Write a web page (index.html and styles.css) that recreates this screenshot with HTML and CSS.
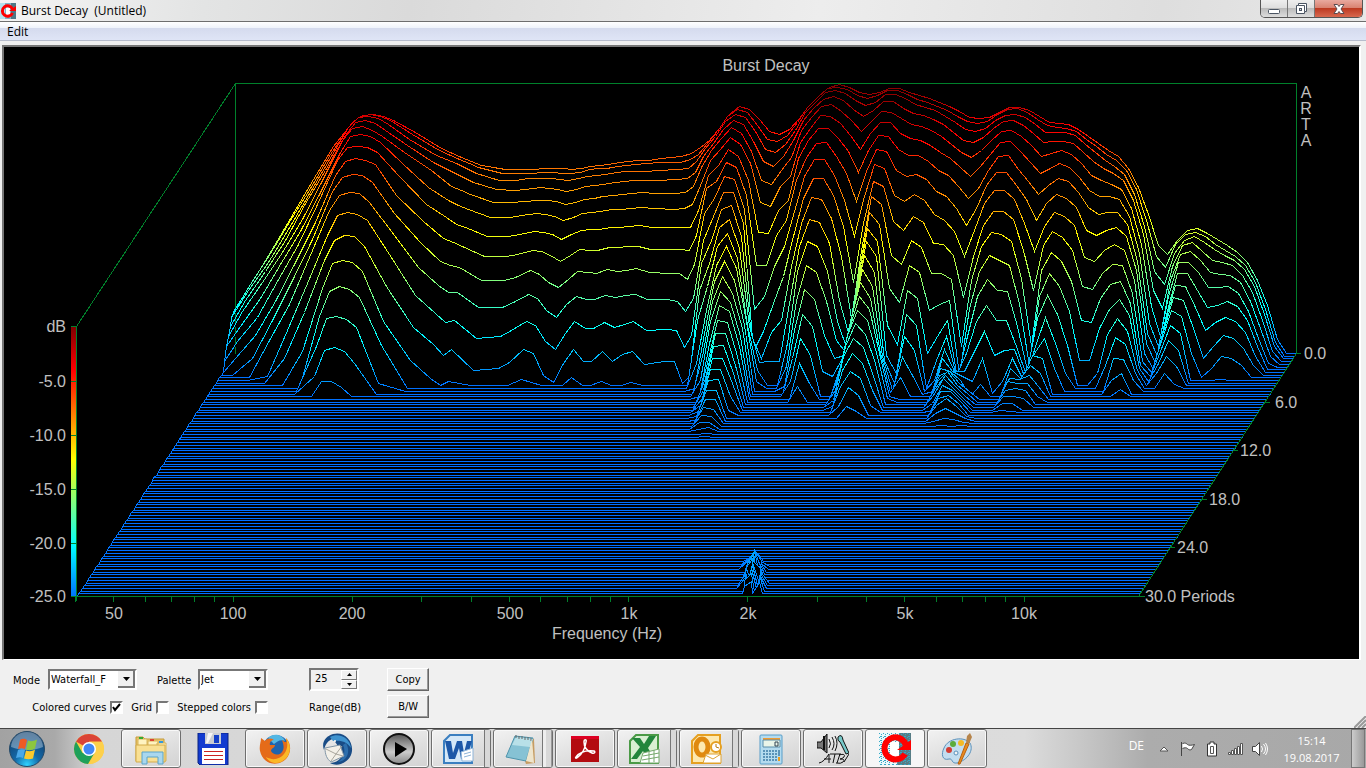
FILE: index.html
```html
<!DOCTYPE html>
<html lang="en">
<head>
  <meta charset="UTF-8">
  <meta name="viewport" content="width=device-width, initial-scale=1.0">
  <title>Burst Decay (Untitled)</title>
  <link rel="stylesheet" href="styles.css">
</head>
<body>
  <header class="titlebar">
    <svg class="app-icon" viewBox="0 0 32 32" aria-hidden="true">
      <rect width="32" height="32" fill="#7fb4c8"/>
      <path d="M0 0h10v32H0z" fill="#b5e2ee"/><path d="M22 0h10v32H22z" fill="#4f7886"/>
      <path d="M12 9h8v16h-8z" fill="#fff"/>
      <path d="M25 20a10.500 10.500 0 1 1 0-8" fill="none" stroke="#f00" stroke-width="6"/>
      <path d="M18 16h14V6z" fill="#f00"/>
    </svg>
    <span class="title">Burst Decay&nbsp; (Untitled)</span>
    <div class="window-buttons">
      <button class="win-btn" aria-label="Minimize">
        <svg width="14" height="14" viewBox="0 0 14 14"><rect x="1.500" y="7.500" width="11" height="4" rx="1" fill="#fff" stroke="#4b5563"/></svg>
      </button>
      <button class="win-btn" aria-label="Restore">
        <svg width="14" height="14" viewBox="0 0 14 14"><path d="M4.500 1.500h8v8h-2v2h-8v-8h2z" fill="#fff" stroke="#4b5563"/><path d="M4.500 3.500h6v6" fill="none" stroke="#4b5563"/><rect x="5.500" y="6.500" width="2" height="2" fill="#ddd" stroke="#4b5563"/></svg>
      </button>
      <button class="win-btn close" aria-label="Close">
        <svg width="14" height="14" viewBox="0 0 14 14"><path d="M2 2.500h3.500L7 4.500l1.500-2H12L9 7l3 4.500H8.500L7 9.500l-1.500 2H2L5 7z" fill="#fff" stroke="#5b4b50"/></svg>
      </button>
    </div>
  </header>

  <nav class="menubar"><button class="menu-item">Edit</button></nav>

  <main class="plot">
    <svg class="chart" viewBox="4 47 1355 612" role="img" aria-label="Burst Decay">
      <defs>
        <linearGradient id="jet" gradientUnits="userSpaceOnUse" x1="0" y1="327" x2="0" y2="597">
          <stop offset="0" stop-color="#800000"/>
          <stop offset=".16" stop-color="#f00"/>
          <stop offset=".49" stop-color="#ff0"/>
          <stop offset=".81" stop-color="#0ff"/>
          <stop offset="1" stop-color="#0070ff"/>
        </linearGradient>
      </defs>
      <rect x="71" y="327" width="5" height="270" fill="url(#jet)"/>
      <path class="axis" d="M76.500 326.500L235.500 83.500H1296.500V353.500M235.500 83.500V353.500"/>
      <g id="slices"></g>
      <path class="axis" d="M76.500 326.500V601M71 326.500h6M71 381.500h6M71 435.500h6M71 489.500h6M71 543.500h6M71 596.500H1145"/>
      <path class="axis" d="M1296.500 353.500L1138.500 596.500M1296 353.500h5M1265 402.500h5M1233 450.500h5M1202 499.500h5M1170 547.500h5"/>
      <path class="axis" id="ticks"/>
      <g class="labels" id="labels">
        <text class="mid" x="766" y="71">Burst Decay</text>
        <text class="mid" x="1306" y="98">A</text>
        <text class="mid" x="1306" y="114">R</text>
        <text class="mid" x="1306" y="130">T</text>
        <text class="mid" x="1306" y="146">A</text>
        <text class="end" x="66" y="332">dB</text>
        <text class="end" x="66" y="387">-5.0</text>
        <text class="end" x="66" y="441">-10.0</text>
        <text class="end" x="66" y="495">-15.0</text>
        <text class="end" x="66" y="549">-20.0</text>
        <text class="end" x="66" y="602">-25.0</text>
        <text class="mid" x="114" y="619">50</text>
        <text class="mid" x="233" y="619">100</text>
        <text class="mid" x="352" y="619">200</text>
        <text class="mid" x="510" y="619">500</text>
        <text class="mid" x="629" y="619">1k</text>
        <text class="mid" x="748" y="619">2k</text>
        <text class="mid" x="905" y="619">5k</text>
        <text class="mid" x="1024" y="619">10k</text>
        <text class="mid" x="607" y="639">Frequency (Hz)</text>
        <text x="1304" y="359">0.0</text>
        <text x="1275" y="408">6.0</text>
        <text x="1240" y="456">12.0</text>
        <text x="1209" y="505">18.0</text>
        <text x="1177" y="553">24.0</text>
        <text x="1145" y="602">30.0 Periods</text>
      </g>
    </svg>
  </main>

  <section class="controls">
    <div class="options">
      <div class="row">
        <label for="mode" class="mode-label">Mode</label>
        <select id="mode" class="drop mode"><option>Waterfall_F</option></select>
        <label for="palette" class="palette-label">Palette</label>
        <select id="palette" class="drop palette"><option>Jet</option></select>
      </div>
      <div class="row checks">
        <label for="colored">Colored curves</label><input type="checkbox" id="colored" checked>
        <label for="grid">Grid</label><input type="checkbox" id="grid">
        <label for="stepped">Stepped colors</label><input type="checkbox" id="stepped">
      </div>
    </div>
    <div class="range">
      <div class="spin">
        <input type="text" id="range" value="25">
        <div class="spin-buttons">
          <button aria-label="Increase"><svg width="5" height="3" viewBox="0 0 5 3"><path d="M0 3L2.500 0L5 3z"/></svg></button>
          <button aria-label="Decrease"><svg width="5" height="3" viewBox="0 0 5 3"><path d="M0 0h5L2.500 3z"/></svg></button>
        </div>
      </div>
      <label for="range">Range(dB)</label>
    </div>
    <div class="actions">
      <button class="push">Copy</button>
      <button class="push">B/W</button>
    </div>
    <svg class="grip" width="12" height="12" viewBox="0 0 12 12" aria-hidden="true"><path d="M0 12L12 0M4 12l8-8M8 12l4-4" stroke="#999" stroke-width="2"/></svg>
  </section>

  <footer class="taskbar">
    <button class="start" aria-label="Start">
      <svg width="38" height="38" viewBox="0 0 38 38">
        <defs>
          <radialGradient id="orb" cx=".5" cy=".95" r=".9"><stop offset="0" stop-color="#2fd3ff"/><stop offset=".4" stop-color="#1469a8"/><stop offset="1" stop-color="#123e6b"/></radialGradient>
        </defs>
        <circle cx="19" cy="19" r="17.500" fill="url(#orb)" stroke="#254a68"/>
        <path d="M3 17a16 15 0 0 1 32 0c-9 4-22 4-32 0z" fill="#dcecf5" opacity=".4"/>
        <path d="M12 10c3-2 5-1 7 0l-2 9c-2-1-5-1-7 0z" fill="#ee5a24"/>
        <path d="M20 10.500c3 1 5 1 9-1l-2 9c-3 2-6 2-9 1z" fill="#8cc63f"/>
        <path d="M10 20c2-1 5-1 7 0l-2 8c-2-1-4-1-7 0z" fill="#4aa8e8"/>
        <path d="M18 20.500c3 1 6 1 9-1l-2 9c-3 1-6 1-9 0z" fill="#fcc92c"/>
      </svg>
    </button>
    <div class="tasks">
      <button class="task" aria-label="Chrome">
        <svg viewBox="0 0 32 32"><circle cx="16" cy="16" r="15" fill="#fc4"/><path d="M16 16L3 8.500A15 15 0 0 1 29 8.500H16z" fill="#db4437"/><path d="M3 8.500A15 15 0 0 0 15 31l7-12-6-3L9.500 20z" fill="#1ea05a"/><path d="M29.400 9H16l6.500 11L16 31A15 15 0 0 0 29.400 9z" fill="#fdd04b"/><circle cx="16" cy="16" r="7" fill="#fff"/><circle cx="16" cy="16" r="5.500" fill="#4387f5"/></svg>
      </button>
      <button class="task open" aria-label="Explorer">
        <svg viewBox="0 0 32 32"><path d="M1 4h7l2 2h19v22H1z" fill="#e8c56a" stroke="#c59b3a"/><path d="M3 6h9v20H3zM13 8h10v18H13zM22 10h9v18H22z" fill="#fff3c0" stroke="#d8b45a"/><path d="M1 12h29v17H1z" fill="#f9e093" stroke="#d4ac4a"/><path d="M4 4h4v2H4z" fill="#3a3"/><path d="M15 6h4v2h-4z" fill="#d43"/><path d="M24 8h4v2h-4z" fill="#39d"/><path d="M7 31V19h21v12h-5v-7H12v7z" fill="#a9d7ee" stroke="#5ba4ca"/></svg>
      </button>
      <button class="task" aria-label="Save">
        <svg viewBox="0 0 32 32"><path d="M1 0h30v32H3l-2-2z" fill="#123bd0" stroke="#0a2380"/><path d="M8 0h16v11H8z" fill="#c8ccd2"/><path d="M11 0l5 0-5 10H9z" fill="#f5f5f5"/><path d="M17 2h5v8h-5z" fill="#1440c8"/><path d="M5 15h23v16H5z" fill="#fff"/><path d="M7 18.500h19M7 22.500h19M7 26.500h19" stroke="#c22"/></svg>
      </button>
      <button class="task open" aria-label="Firefox">
        <svg viewBox="0 0 32 32"><circle cx="17" cy="15" r="13" fill="#1f63ad"/><path d="M9 5c6-6 15-3 17 3-5-2-8 1-11 3z" fill="#52b7e4"/><path d="M2 5l4 3c3-3 6-3 9-1-3 0-5 3-4 5h5c0 3-4 3-4 6 2 4 8 5 11 1 3-4 1-9 0-12 4 3 5 3 4-2 6 6 5 16 0 21C19 34 4 32 1 18 0 13 2 9 2 5z" fill="#e56b19"/><path d="M27 5c7 9 4 20-5 24-7 3-13-1-15-5 7 4 14 2 18-3 4-5 4-11 2-16z" fill="#fbb827"/></svg>
      </button>
      <button class="task open" aria-label="Thunderbird">
        <svg viewBox="0 0 32 32"><path d="M12 1C23-2 32 7 31 18c-1 10-13 17-22 12 6 0 12-4 13-10L12 6C7 7 4 12 3 17 0 9 5 3 12 1z" fill="#194c86"/><path d="M9 4c9-5 20 1 21 11-4-6-9-8-18-7z" fill="#3f93cf"/><path d="M25 10c5 9 1 18-8 19 6-4 8-11 5-17z" fill="#2d6eac"/><path d="M4 15l15-3 4 11-13 6c-4-3-6-7-6-14z" fill="#f3f0e8" stroke="#8296a7"/><path d="M5 16l10 5 6-8M10 28l5-7 7 2" fill="none" stroke="#a9a69d"/><circle cx="14" cy="8" r="1" fill="#fff"/></svg>
      </button>
      <button class="task open" aria-label="Player">
        <svg viewBox="0 0 32 32"><defs><linearGradient id="steel" x1="0" y1="0" x2="0" y2="1"><stop offset="0" stop-color="#555"/><stop offset=".6" stop-color="#ccc"/><stop offset="1" stop-color="#888"/></linearGradient></defs><circle cx="16" cy="16" r="15" fill="url(#steel)" stroke="#111" stroke-width="2"/><path d="M12 9l12 7-12 8z" fill="#000"/></svg>
      </button>
      <button class="task open stack" aria-label="Word">
        <svg viewBox="0 0 32 32"><path d="M8 2h22v28H2V8z" fill="#d5e8f8" stroke="#3b7fc0" stroke-width="2"/><path d="M3 8h6l2 12 4-12h5l2 12 3-12h5l-5 18h-6l-2-11-4 11H7z" fill="#1d58a8"/><path d="M19 19l12-4v13H20z" fill="#fff" stroke="#8eb4d8"/><path d="M22 21l7-2M22 24l7-2" stroke="#8eb4d8"/></svg>
      </button>
      <button class="task open stack many" aria-label="Notepad">
        <svg viewBox="0 0 32 32"><path d="M12 3l18 3 1 24-9 1z" fill="#c69c62"/><path d="M11 3l18 2-7 23L2 24z" fill="#86c2d4" stroke="#4f94ac"/><path d="M12 4l17 2-3 8-18-2z" fill="#b8e0e8"/><path d="M12 2v3m3-2v3m3-3v3m3-2v3m3-3v3m3-2v3" stroke="#666"/><path d="M28 6l2 24-8-2z" fill="#eee5cd"/></svg>
      </button>
      <button class="task open" aria-label="Reader">
        <svg viewBox="0 0 32 32"><path d="M2 3h28v26H2z" fill="#b30b10"/><path d="M2 3h28v3H2z" fill="#d02"/><path d="M7 24c3-4 9-7 18-6 2 1 0 3-2 2-5-2-8-6-8-11 0-3 3-3 2 0-1 7-4 12-8 15-2 2-3 1-2 0z" fill="none" stroke="#fff" stroke-width="1.500"/></svg>
      </button>
      <button class="task open stack" aria-label="Excel">
        <svg viewBox="0 0 32 32"><path d="M8 2h22v28H2V8z" fill="#d9efd2" stroke="#4b9a46" stroke-width="2"/><path d="M4 5h8l4 6 5-8h7l-8 12 6 10h-7l-4-7-6 8H3l9-12z" fill="#23863c"/><path d="M15 20l16-4v14H12z" fill="#fff" stroke="#76a96c"/><path d="M15 23l16-3M14 27l17-3M21 18v12M26 17v12" stroke="#76a96c"/></svg>
      </button>
      <button class="task open stack" aria-label="Outlook">
        <svg viewBox="0 0 32 32"><path d="M8 2h22v28H2V8z" fill="#fde9b0" stroke="#e5a021" stroke-width="2"/><ellipse cx="12" cy="14" rx="6" ry="8" fill="none" stroke="#e08a10" stroke-width="5"/><path d="M16 21h15v9H13z" fill="#fff" stroke="#dda334"/><path d="M15 22l8 4 8-5" fill="none" stroke="#dda334"/><circle cx="26" cy="14" r="5" fill="#fff" stroke="#e5a021" stroke-width="2"/><path d="M26 11v3l3 1" fill="none" stroke="#b77910"/></svg>
      </button>
      <button class="task open" aria-label="Calculator">
        <svg viewBox="0 0 32 32"><rect x="5" y="2" width="22" height="29" rx="1" fill="#b4dbef" stroke="#579dc8"/><path d="M8 5h17v2H8z" fill="#ed9b34"/><path d="M8 7h17v7H8z" fill="#eaf5e9" stroke="#5a8eaa"/><path d="M20 9h3v4h-3z" fill="none" stroke="#345"/><path d="M8 18h14M8 21h14M8 24h14M8 27h14" stroke="#5b93b8" stroke-width="2" stroke-dasharray="2 1"/><path d="M23 17h2v6h-2z" fill="#5b93b8"/><path d="M23 24h2v4h-2z" fill="#ef9c1a"/></svg>
      </button>
      <button class="task open" aria-label="ATB">
        <svg viewBox="0 0 32 32"><path d="M0 9h4l6-8v19l-6-5H0z" fill="#777" stroke="#111"/><path d="M7 3v14" stroke="#111" stroke-width="2"/><path d="M12 6q3 5 0 9M15 4q4 7 0 13M18 3q4 7 0 15" fill="none" stroke="#111"/><path d="M21 4q4-4 5 3l6 13-3 1-6-12q-3-1-2-5z" fill="#77c9c9" stroke="#111"/><path d="M2 30q5-1 10-9v9M7 26h7M13 21h11M18 21l-2 9M23 21l-3 9M22 22q7-2 5 2-2 2-4 2 6 0 3 3-2 2-7 1M27 29l5-8" fill="none" stroke="#111"/></svg>
      </button>
      <button class="task open active" aria-label="ARTA">
        <svg viewBox="0 0 32 32"><defs><pattern id="noise" width="4" height="4" patternUnits="userSpaceOnUse"><path d="M0 0h1v1H0zM2 1h1v1H2zM1 3h2v1H1z" fill="#39a7c4"/></pattern></defs><path d="M0 0h32v32H0z" fill="#e8f8fb"/><path d="M20 0h12v32H18z" fill="#577d86"/><path d="M0 0h32v32H0z" fill="url(#noise)"/><path d="M11 9h9v15h-9z" fill="#fff"/><path d="M26 21a11 11 0 1 1 1-9" fill="none" stroke="#f00" stroke-width="6"/><path d="M18 17h14V7z" fill="#f00"/></svg>
      </button>
      <button class="task open" aria-label="Paint">
        <svg viewBox="0 0 32 32"><path d="M3 15C7 5 23 3 29 10c4 7-2 17-13 20-6 1-4-5-8-4-7 2-8-5-5-11z" fill="#c3ddef" stroke="#5b91ba"/><circle cx="8" cy="17" r="3" fill="#d43c32"/><circle cx="12" cy="11" r="3" fill="#5bab3b"/><circle cx="20" cy="10" r="3" fill="#f4ba26"/><circle cx="15" cy="20" r="2" fill="#f4f4f4" stroke="#5b91ba"/><path d="M25 10l3 1-9 20-2 0z" fill="#e98c20" stroke="#b76110"/><path d="M25 10l1-7 3-3 2 4-3 7z" fill="#b6844b"/></svg>
      </button>
    </div>
    <div class="tray">
      <span class="lang">DE</span>
      <svg width="16" height="6" viewBox="0 0 16 6"><path d="M4 5l4-4 4 4z" fill="#fff" stroke="#555"/></svg>
      <svg width="16" height="16" viewBox="0 0 16 16"><path d="M1.500 1v14M2.500 2.500c3-1 4 0 5 1s4 1 7 0l-3 5c-2 1-3 0-4-1s-3-1-5 0" fill="#fff" stroke="#444"/></svg>
      <svg width="16" height="16" viewBox="0 0 16 16"><path d="M6 1h4v2h2.500v12h-9V3H6z" fill="#fff" stroke="#333"/><path d="M6.500 5.500h3v7h-3z" fill="#fff" stroke="#555"/></svg>
      <svg width="16" height="16" viewBox="0 0 16 16"><path d="M.500 11.500h2v2h-2zM3.500 9.500h2v4h-2zM6.500 7.500h2v6h-2zM9.500 5.500h2v8h-2zM12.500 2.500h2v11h-2z" fill="#fff" stroke="#555"/></svg>
      <svg width="16" height="16" viewBox="0 0 16 16"><path d="M.500 5.500h3l4-4v13l-4-4h-3z" fill="#fff" stroke="#444"/><path d="M9.500 5q2 3 0 6M11.500 3q4 5 0 10M13.500 2q4 6 0 12" fill="none" stroke="#fff"/></svg>
      <div class="clock"><time>15:14</time><time>19.08.2017</time></div>
      <button class="desktop" aria-label="Show desktop"></button>
    </div>
  </footer>
  <script src="waterfall.js"></script>
</body>
</html>
```
FILE: styles.css
```css
* { box-sizing: border-box; }
body {
  margin: 0;
  min-height: 100vh;
  display: flex;
  flex-direction: column;
  background: #f0f0f0;
  color: #000;
  font-family: "DejaVu Sans Condensed", "DejaVu Sans", sans-serif;
  font-size: 11px;
}
button, select, input { font: inherit; color: inherit; }
button { border: none; background: none; padding: 0; }

.titlebar {
  display: flex;
  align-items: center;
  height: 22px;
  gap: 5px;
  background: linear-gradient(100deg, #f4f4f4, #e3e4e4 15%, #dadada 30%, #ededed 60%, #dedede 85%, #e8e8e8);
  border-bottom: 1px solid #6e6e6e;
  font-family: "Open Sans", "Noto Sans", sans-serif;
  font-size: 12px;
}
.app-icon { width: 16px; height: 16px; }
.title { flex: 1; }
.window-buttons {
  display: flex;
  align-self: flex-start;
  height: 18px;
  margin-right: 3px;
  border: 1px solid #555;
  border-top: none;
  border-radius: 0 0 5px 5px;
  overflow: hidden;
}
.win-btn {
  width: 27px;
  display: flex;
  align-items: center;
  justify-content: center;
  background: linear-gradient(#eee, #ddd 50%, #bbb 50%, #ddd);
  border-right: 1px solid #777;
}
.win-btn.close {
  width: 47px;
  border: none;
  background: linear-gradient(#e9a99f, #d8806f 48%, #bd3a22 50%, #d8684f);
}

.menubar {
  height: 19px;
  display: flex;
  align-items: center;
  padding-left: 7px;
  background: linear-gradient(#fff, #eef2fa 35%, #d5dbee 36%, #dfe5f6);
  border-bottom: 1px solid #b6bccc;
  font-family: "Open Sans", "Noto Sans", sans-serif;
  font-size: 12px;
}

.plot {
  margin: 4px 5px 0 2px;
  border: 2px solid #777;
  border-right-color: #fff;
  border-bottom: 1px solid #fff;
  background: #000;
}
.chart { display: block; width: 100%; }
.axis { fill: none; stroke: #00802b; shape-rendering: crispEdges; }
.slice { fill: #000; shape-rendering: crispEdges; }
.labels {
  fill: #c0c0c0;
  font-family: "Liberation Sans", Arial, sans-serif;
  font-size: 16px;
}
.mid { text-anchor: middle; }
.end { text-anchor: end; }

.controls {
  flex: 1;
  display: flex;
  align-items: flex-start;
  padding: 8px 0 0 13px;
}
.options { display: flex; flex-direction: column; gap: 5px; }
.row { display: flex; align-items: center; height: 23px; }
.mode-label { width: 35px; padding-top: 2px; }
.palette-label { width: 41px; margin-left: 20px; padding-top: 2px; }
.checks { justify-content: flex-end; }
.checks label + input { margin-right: 8px; }
.checks label + input:last-child { margin-right: 0; }
.drop, .spin, input[type="checkbox"] {
  border: 2px solid;
  border-color: #777 #fff #fff #777;
}
.drop {
  appearance: none;
  height: 21px;
  padding: 0 1px;
  border-radius: 0;
  background: #fff url("data:image/svg+xml,%3Csvg xmlns='http://www.w3.org/2000/svg' width='17' height='17'%3E%3Cpath fill='%23f0f0f0' d='M0 0h17v17H0z'/%3E%3Cpath fill='none' stroke='%23777' stroke-width='2' d='M16 0v16H0'/%3E%3Cpath d='M5 6h7l-3.500 4z'/%3E%3C/svg%3E") no-repeat right center;
}
.mode { width: 89px; }
.palette { width: 70px; }
input[type="checkbox"] {
  appearance: none;
  width: 13px;
  height: 13px;
  margin: 0 0 0 4px;
  background: #fff;
}
input[type="checkbox"]:checked {
  background: #fff url("data:image/svg+xml,%3Csvg xmlns='http://www.w3.org/2000/svg' width='9' height='9'%3E%3Cpath fill='none' stroke='%23000' stroke-width='2' d='M1 4l2 3 5-6'/%3E%3C/svg%3E") center;
}
.range { margin-left: 41px; display: flex; flex-direction: column; gap: 4px; }
.range label { height: 23px; line-height: 26px; }
.spin { display: flex; width: 50px; height: 23px; }
.spin input {
  flex: 1;
  min-width: 0;
  border: none;
  background: none;
  padding: 0 0 2px 4px;
}
.spin-buttons { display: flex; flex-direction: column; width: 16px; }
.spin-buttons button {
  flex: 1;
  display: flex;
  align-items: center;
  justify-content: center;
  border: 1px solid;
  border-color: #fff #777 #777 #fff;
}
.actions { margin-left: 26px; display: flex; flex-direction: column; gap: 4px; }
.push {
  width: 42px;
  height: 23px;
  border: 1px solid;
  border-color: #fff #666 #666 #fff;
  box-shadow: inset -1px -1px #999;
}
.grip { margin-left: auto; align-self: flex-end; }

.taskbar {
  height: 40px;
  display: flex;
  border-top: 1px solid #444;
  background: linear-gradient(90deg, #a2a2a2, #a9a9a9 4%, #d6d6d6 7%, #dcdcdc 75%, #c8c8c8 79%, #acacac 84%, #a8a8a8);
  color: #fff;
}
.start { width: 59px; padding-left: 8px; text-align: left; }
.start svg { display: block; }
.tasks { display: flex; gap: 2px; }
.task {
  position: relative;
  width: 60px;
  height: 39px;
  display: flex;
  align-items: center;
  justify-content: center;
  border: 1px solid transparent;
  border-radius: 3px;
}
.task svg { width: 32px; height: 32px; }
.task.open {
  border-color: #6f6f6f;
  background: linear-gradient(160deg, #f2f2f2, #dedede 60%, #d3d3d3);
  box-shadow: inset 0 0 0 1px #f8f8f8;
}
.task.active { background: #f6f6f6; }
.task.stack { padding-right: 6px; }
.task.stack::after {
  content: "";
  position: absolute;
  top: 0;
  right: 0;
  bottom: 0;
  width: 5px;
  border-left: 1px solid #777;
  background: #d8d8d8;
}
.task.many::after { width: 8px; border-right: 1px solid #999; box-shadow: inset 3px 0 #eee; }
.tray {
  margin-left: auto;
  display: flex;
  align-items: center;
  gap: 8px;
  font-family: "Open Sans", "Noto Sans", sans-serif;
  font-size: 12px;
}
.lang { margin-right: 4px; padding-bottom: 6px; }
.clock {
  width: 63px;
  margin-left: 4px;
  display: flex;
  flex-direction: column;
  align-items: center;
  font-size: 11px;
  line-height: 17px;
}
.desktop {
  width: 14px;
  height: 39px;
  margin-right: 1px;
  border: 1px solid #777;
  background: linear-gradient(90deg, #ccc, #999);
}
```
FILE: waterfall.js
```js
const SVG = "http://www.w3.org/2000/svg";
const SLICES = 91;

// Ridge and valley columns. Each panel has an origin in chart pixels, three
// units to the pixel. Column: [x at slice 0, x step per slice, levels...].
// A column that runs out of levels has decayed to the floor.
const panels = [
  { x: 215, y: 80, cols: [
    [61, -5.27, 686,697,712,738,768,800,845,877],
    [115, -7.8, 600,612,632,660,695,738,785,835],
    [175, -7.8, 503,520,548,575,608,655,712,765,835],
    [235, -7.8, 400,420,448,482,518,552,603,663,722,780,888],
    [295, -7.8, 298,325,345,370,418,455,498,548,600,672,750,835],
    [355, -7.8, 200,222,244,270,300,336,372,427,478,533,610,698,815],
    [415, -7.8, 125,135,143,165,182,218,240,285,335,392,465,540,625,710,800,890],
    [445, -7.8, 107,108,113,126,145,170,203,243,293,347,407,480,550,633,716,812,904],
    [475, -7.8, 102,103,108,121,138,162,198,236,283,337,398,467,540,620,708,803,904],
    [505, -7.8, 108,109,116,130,150,170,202,240,287,341,402,470,546,628,718,815,922],
    [535, -7.8, 120,122,132,150,168,187,217,252,307,367,422,500,575,652,742,850],
    [600, -7.8, 157,162,178,195,217,250,290,345,400,455,522,618,725,797,910],
    [680, -7.8, 205,212,225,247,270,322,372,425,487,563,645,742,842],
    [740, -7.8, 233,237,250,277,318,362,413,474,545,617,700,792,895],
    [770, -7.8, 245,250,265,293,332,376,432,488,557,637,727,825,918],
    [800, -8.2, 255,262,280,307,343,388,442,498,563,637,722,808,904],
    [870, -8.7, 267,280,300,329,367,413,468,530,602,683,774,872]
  ] },
  { x: 500, y: 80, cols: [
    [60, -6, 268,280,300,330,367,413,468,530,602,683,770,865],
    [95, -6, 267,280,296,327,364,407,462,522,592,668,752,848],
    [140, -6.2, 265,277,294,323,360,401,453,510,572,644,725,808,899],
    [165, -5.8, 265,277,296,325,360,403,457,515,582,654,735,820,908],
    [190, -5.5, 266,280,298,327,363,408,463,525,607,690,785,885],
    [215, -5, 268,280,300,334,374,421,478,545,621,711,809,908],
    [245, -4.9, 265,277,296,328,367,413,463,527,597,672,760,850],
    [272, -4.8, 260,268,288,320,357,401,451,509,574,650,725,808,891],
    [300, -4.5, 257,266,286,316,354,398,449,510,578,658,745,844],
    [325, -4.5, 252,264,284,312,350,395,447,510,580,658,745,844],
    [360, -4.7, 248,260,278,308,346,389,443,502,569,647,727,813,905],
    [385, -4.2, 245,256,275,304,342,387,441,502,575,653,743,844],
    [415, -4.3, 242,252,273,302,340,384,438,500,570,646,733,823],
    [445, -4.4, 240,250,273,301,338,382,436,499,566,643,725,814,907],
    [485, -4.6, 236,248,271,301,340,386,443,507,577,659,752,852],
    [545, -4.6, 229,246,268,299,339,387,443,507,580,659,749,844],
    [575, -4.6, 220,238,265,295,336,385,441,509,580,665,752,844],
    [600, -4.7, 202,223,243,277,320,374,441,511,598,694,802,909],
    [627, -5.27, 180,190,205,230,262,315,392,465,552,655,765,888],
    [657, -5.27, 145,155,170,190,212,240,285,325,400,480,550,630,720,850,925],
    [687, -5.27, 103,110,125,148,174,208,255,305,355,410,480,550,620,690,760,830,900,950],
    [717, -5.27, 79,88,102,120,143,173,208,247,290,337,388,443,500,555,605,665,725,790,850,895,930,955,975,995,1010,1020,1035,1043,1050],
    [747, -5.27, 88,96,112,133,160,192,228,262,298,337,377,418,460,500,543,590,635,677,720,760,798,835,868,900,932,958,982,1006,1027,1047,1062,1072],
    [777, -5.27, 118,135,155,185,215,250,300,345,388,430,470,505,535,565,600,640,667,695,727,760,797,835,867,898,932,958,987,1008,1027,1043,1059,1070,1079,1086],
    [807, -5.27, 155,178,208,245,302,368,456,556,687,815,770,740,735,725,735,745,770,800,830,855,880,910,950,990]
  ] },
  { x: 770, y: 70, cols: [
    [27, -5.27, 193,215,246,289,344,408,490,585,680,785,865,878,900,935],
    [57, -5.27, 177,197,224,260,300,350,420,495,590,700,787,873],
    [87, -5.27, 145,157,182,212,262,320,390,450,530,620,750,873,955],
    [117, -5.27, 107,113,128,150,182,218,265,330,425,500,590,700,820,890,950],
    [147, -5.27, 75,83,97,115,142,174,212,262,318,385,460,530,605,690,780,865,935],
    [177, -5.27, 52,55,66,87,108,136,175,220,268,324,383,447,515,587,658,733,805,880,948],
    [207, -5.27, 44,52,60,80,103,138,175,218,268,324,388,458,530,608,688,768,855,940],
    [237, -5.27, 52,57,70,92,125,160,205,260,315,375,445,520,605,695,795,905],
    [267, -5.27, 68,75,92,118,150,195,245,310,390,470,560,690,755,810,865,918],
    [297, -5.27, 73,85,107,140,184,237,306,394,498,637,745,800,840,850,855,865,890,910,930,960,990,1010],
    [327, -5.27, 66,77,97,120,155,190,240,305,380,460,540,600,640,670,700,730,755,775,795,830,860,900,950,1010],
    [357, -5.27, 54,60,72,94,124,156,195,238,284,333,378,427,475,515,557,597,637,680,722,760,805,850,903,952,1010],
    [387, -5.27, 56,61,73,95,126,158,200,245,295,348,403,462,515,560,607,650,685,717,752,792,832,880,925,975,1025],
    [417, -5.27, 66,74,86,115,146,190,237,300,375,455,555,655,765,855,870,860,850,850,860,880,920,960,1005,1038],
    [447, -5.27, 75,88,103,130,162,205,255,318,393,482,583,697,822,910,940,960,968,980,984,1005],
    [477, -5.27, 84,96,111,137,170,210,257,312,374,440,511,587,661,733,798,862,923],
    [507, -5.27, 96,108,122,147,182,226,274,328,390,458,533,608,685,765,840,915],
    [537, -5.27, 110,122,138,162,200,247,302,365,433,519,611,722,850,965],
    [567, -5.27, 125,138,157,186,222,265,317,378,450,523,611,702,800,870,930,965],
    [597, -5.27, 141,155,178,210,248,292,350,415,485,555,627,692,750,800,838,865,895,915,935,955,975,1000,1025],
    [627, -5.27, 146,160,184,216,262,319,385,466,560,681,830,915,925,915,905,905,905,905,905,915,925,945,965,985,1005,1030,1055],
    [657, -5.27, 141,154,174,202,240,290,355,415,480,560,630,715,800,850,905,920,930,940,945,950,955,960,965,975,985,1015,1045,1066],
    [687, -5.27, 127,134,150,174,210,252,300,345,400,465,530,603,680,755,845,935,980,965,970,980,985,990,995,1000,1010,1030,1048,1068],
    [717, -5.27, 113,118,135,154,183,217,259,306,361,423,488,557,628,706,785,865,943,990,998,1006,1014,1022,1030,1035,1040,1045,1056,1067],
    [747, -5.27, 112,116,133,152,180,215,257,306,361,425,494,572,660,750,855,970],
    [777, -5.27, 122,128,143,165,198,243,297,345,388,448,515,587,665,750,840,935],
    [807, -5.27, 140,147,163,190,227,277,335,388,460,540,625,700,770,830,838,865,895,925,935,960,980,1000,1020],
    [837, -5.27, 156,167,186,217,259,310,373,450,545,661,830,890,900,915,920,925,925,928,940,955,980,1000,1024],
    [867, -5.27, 159,172,187,215,250,294,345,400,470,525,600,680,745,820,850,855,885,915,940,960,985]
  ] },
  { x: 1020, y: 80, cols: [
    [146, -5.27, 132,144,158,184,212,250,296,343,397,455,517,580,646,712,775,835,880,920,950],
    [176, -5.27, 147,155,167,191,222,262,305,355,410,472,543,620,702,790,865],
    [206, -5.27, 168,178,194,217,250,292,337,382,437,510,605,695,795,880],
    [236, -5.27, 190,200,218,245,287,332,383,450,532,620,722,840],
    [266, -5.27, 212,223,240,266,302,348,403,466,544,629,727,840],
    [295, -5.27, 230,242,258,280,313,350,396,452,510,580,655,745,880],
    [325, -5.27, 264,270,283,300,327,358,397,443,494,552,613,687,762,855],
    [355, -5.27, 322,328,342,360,385,408,432,468,512,557,605,658,715,772,835,902],
    [385, -5.27, 403,420,440,462,492,520,545,570,600,640,670,705,755,793,837,880,929],
    [415, -5.27, 495,530,575,630,680,730,760,790,820,845,855,865,870,880,900],
    [443, -5.27, 523,562,612,685,770,800,830,850,867,878,890,905],
    [473, -5.27, 480,492,520,560,600,650,690,725,755,785,815,850,880],
    [503, -5.27, 452,462,480,497,522,548,580,617,652,692,735,780,828,880],
    [533, -5.27, 446,457,468,488,513,547,580,620,662,710,760,812,860,912],
    [563, -5.27, 460,470,487,513,542,578,632,682,745,820],
    [593, -5.27, 478,492,508,542,578,622,683,752,836,893],
    [623, -5.27, 497,512,525,547,583,622,675,728,800,866,902],
    [653, -5.27, 517,530,540,555,585,620,664,713,767,830,897],
    [683, -5.27, 548,555,568,585,608,640,678,723,775,835],
    [713, -5.27, 600,607,620,637,665,695,722,757,805,857],
    [743, -5.27, 675,688,702,722,745,775,800,830,857],
    [773, -5.27, 778,787,800,815,830,850],
    [800, -5.27]
  ] },
  // late echo near 2 kHz, starts at slice 76
  { x: 660, y: 530, from: 76, cols: [
    [240, -1.6],
    [266, -1, 88,86,88,92,94,98,106,112,118,128,134,142,152,168],
    [286, -1, 67,64,62,62,64,68,74,81,90,98,106,114,130,154],
    [306, -0.5, 86,84,90,95,99,104,108,112,116,124,130,138,146,156],
    [326, 0.8]
  ] }
];

function floorY(k) { return 353.5 + k * 2.7; }
function leftX(k) { return 235.5 - k * 1.756; }

function slicePoints(k) {
  const base = floorY(k);
  const pts = [];
  for (const p of panels) {
    const n = k - (p.from || 0);
    if (n < 0) continue;
    for (const [x, step, ...levels] of p.cols) {
      const y = n < levels.length ? p.y + levels[n] / 3 : base;
      pts.push([p.x + (x + step * n) / 3, Math.min(y, base)]);
    }
  }
  pts.push([leftX(k) + 1061, base]);
  return pts.filter(q => q[0] >= leftX(k) - 1).sort((a, b) => a[0] - b[0]);
}

function add(parent, name, attrs) {
  const el = document.createElementNS(SVG, name);
  for (const key in attrs) el.setAttribute(key, attrs[key]);
  parent.appendChild(el);
  return el;
}

const snap = v => Math.floor(v) + 0.5;
const chart = document.querySelector(".chart");
const defs = chart.querySelector("defs");
const group = document.getElementById("slices");
let last = null;

for (let k = 0; k < SLICES; k++) {
  const base = snap(floorY(k));
  const grad = add(defs, "linearGradient", { id: "g" + k, href: "#jet", gradientUnits: "userSpaceOnUse", x1: 0, x2: 0, y1: base - 270, y2: base });
  const pts = slicePoints(k).map(q => [snap(q[0]), snap(q[1])]);
  if (last) pts.unshift(last);
  last = pts[last ? 1 : 0];
  add(group, "polyline", { class: "slice", points: pts.join(" "), stroke: `url(#${grad.id})` });
}

// log frequency ticks, 40 Hz to 10 kHz
let d = "";
for (const decade of [10, 100, 1000, 10000]) {
  for (let m = 1; m < 10; m++) {
    const f = m * decade;
    if (f < 40 || f > 10000) continue;
    d += `M${snap(233 + 395.5 * Math.log10(f / 100))} 597v5`;
  }
}
document.getElementById("ticks").setAttribute("d", d);
```
